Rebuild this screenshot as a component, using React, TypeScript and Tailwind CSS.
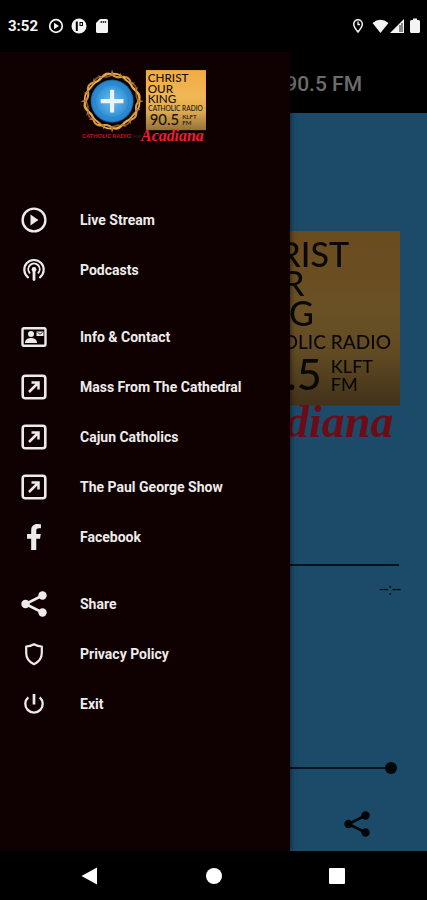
import React from "react";
import { FaFacebookF } from "react-icons/fa";

const SANS = "font-['Roboto','Liberation_Sans',sans-serif]";

function ringPath(radius: number, wobble: number, lobes: number, phase: number) {
  const points: string[] = [];
  for (let i = 0; i < 120; i++) {
    const a = (i / 120) * Math.PI * 2;
    const r = radius + wobble * Math.sin(lobes * a + phase);
    points.push(`${(93 + r * Math.cos(a)).toFixed(1)} ${(96 + r * Math.sin(a)).toFixed(1)}`);
  }
  return `M${points.join("L")}Z`;
}

function thornPath() {
  let d = "";
  for (let i = 0; i < 16; i++) {
    const a = (i / 16) * Math.PI * 2 - Math.PI / 2;
    const tip = i % 4 === 0 ? 92 : 86;
    const lean = i % 4 === 0 ? 0 : i % 2 === 0 ? 0.12 : -0.12;
    const at = (r: number, t: number) =>
      `${(93 + r * Math.cos(t)).toFixed(1)} ${(96 + r * Math.sin(t)).toFixed(1)}`;
    d += `M${at(74, a - 0.07)}L${at(tip, a + lean)}L${at(74, a + 0.07)}Z`;
  }
  return d;
}

function Logo({ id, className }: { id: string; className: string }) {
  return (
    <svg viewBox="0 0 368 226" className={className} role="img" aria-label="Christ Our King Catholic Radio">
      <defs>
        <linearGradient id={`${id}-gold`} x1="0" y1="0" x2="0" y2="1">
          <stop offset="0" stopColor="#f2ab45" />
          <stop offset="0.45" stopColor="#f0b755" />
          <stop offset="0.7" stopColor="#dca94f" />
          <stop offset="1" stopColor="#94713a" />
        </linearGradient>
        <radialGradient id={`${id}-blue`}>
          <stop offset="0" stopColor="#6fbdf0" />
          <stop offset="0.6" stopColor="#3f9cdd" />
          <stop offset="1" stopColor="#1f7fc8" />
        </radialGradient>
      </defs>
      <circle cx="93" cy="96" r="76" fill="#080406" />
      <g fill="none" strokeLinejoin="round">
        <path d={ringPath(76, 4, 8, 0)} stroke="#8a571b" strokeWidth="5" />
        <path d={ringPath(76, 5, 8, 3.1)} stroke="#d99a3a" strokeWidth="6" />
        <path d={ringPath(76, 4, 4, 1.4)} stroke="#efb350" strokeWidth="4" />
      </g>
      <path d={thornPath()} fill="#b87f2f" />
      <circle cx="93" cy="96" r="61" fill={`url(#${id}-blue)`} stroke="#1d6fae" strokeWidth="2" />
      <circle cx="93" cy="96" r="48" fill="none" stroke="#2b86cb" strokeWidth="3" />
      <path d="M93 63v66M60 96h66" stroke="#e9f4fb" strokeWidth="12" />
      <rect x="191" y="6" width="174" height="174" fill={`url(#${id}-gold)`} />
      <g fill="#17120c" fontFamily="Lato, sans-serif" fontWeight="500">
        <text x="196" y="42" fontSize="34">CHRIST</text>
        <text x="196" y="71" fontSize="34">OUR</text>
        <text x="196" y="101" fontSize="34">KING</text>
        <text x="198" y="124" fontSize="19">CATHOLIC RADIO</text>
        <text x="202" y="165" fontSize="43">90.5</text>
        <text x="296" y="148" fontSize="18">KLFT</text>
        <text x="296" y="166" fontSize="18">FM</text>
      </g>
      <text x="6" y="204" fontSize="17" fontWeight="700" fill="#c8102a" fontFamily="Lato, sans-serif">CATHOLIC RADIO</text>
      <text x="154" y="204" fontSize="11" fill="#3a2a2c" fontFamily="Lato, sans-serif">FOR</text>
      <text x="177" y="211" fontSize="46" fontWeight="700" fontStyle="italic" fill="#f51c34" fontFamily="'Liberation Serif', serif">Acadiana</text>
    </svg>
  );
}

const icon = "h-7 w-7 shrink-0";

function PlayIcon() {
  return (
    <svg viewBox="0 0 28 28" className={icon} fill="none">
      <circle cx="14" cy="14" r="11.4" stroke="currentColor" strokeWidth="2.4" />
      <path d="M10.5 8.500v11l8-5.500z" fill="currentColor" />
    </svg>
  );
}

function PodcastIcon() {
  return (
    <svg viewBox="0 0 28 28" className={icon} fill="none" stroke="currentColor" strokeLinecap="round">
      <path d="M8 21.300a9.700 9.700 0 1 1 12 0" strokeWidth="2.200" />
      <path d="M9.600 16.800a5.700 5.700 0 1 1 8.800 0" strokeWidth="1.900" />
      <circle cx="14" cy="13.500" r="2.400" fill="currentColor" stroke="none" />
      <path d="M14 14v9.500" strokeWidth="2.800" />
    </svg>
  );
}

function ContactIcon() {
  return (
    <svg viewBox="0 0 28 28" className={icon} fill="none">
      <rect x="2.500" y="5.300" width="23" height="17.400" rx="1.500" stroke="currentColor" strokeWidth="2.400" />
      <circle cx="11" cy="11" r="3" fill="currentColor" />
      <path d="M5 20c0-3.800 3.500-5 6-5s6 1.200 6 5z" fill="currentColor" />
      <path d="M16.500 8.500h7v4.500h-7z" fill="currentColor" />
      <path d="M17.500 9.500l2.500 1.700 2.500-1.700" stroke="#0e0102" strokeWidth="0.800" />
    </svg>
  );
}

function LinkOutIcon() {
  return (
    <svg viewBox="0 0 28 28" className={icon} fill="none" stroke="currentColor">
      <rect x="2.700" y="2.700" width="22.600" height="22.600" rx="2.500" strokeWidth="2.600" />
      <path d="M9 19l9-9M11.500 9.500h7v7" strokeWidth="2.500" />
    </svg>
  );
}

function FacebookIcon() {
  return (
    <span className="flex h-7 w-7 shrink-0 items-center justify-center">
      <FaFacebookF size={26} />
    </span>
  );
}

function ShareIcon({ className = icon }: { className?: string }) {
  return (
    <svg viewBox="0 0 28 28" className={className} fill="currentColor">
      <path d="M22.500 5.500L5.500 14l17 8.500" fill="none" stroke="currentColor" strokeWidth="2.600" />
      <circle cx="22.500" cy="5.500" r="4.200" />
      <circle cx="5.500" cy="14" r="4.200" />
      <circle cx="22.500" cy="22.500" r="4.200" />
    </svg>
  );
}

function ShieldIcon() {
  return (
    <svg viewBox="0 0 28 28" className={icon} fill="none" stroke="currentColor" strokeWidth="2.200" strokeLinejoin="round">
      <path d="M14 4.300c2.500 1.500 5 2.200 7.800 2.200v6.500c0 5-3 9-7.800 11.200-4.800-2.200-7.800-6.200-7.800-11.200v-6.500c2.800 0 5.300-.7 7.800-2.200z" />
    </svg>
  );
}

function PowerIcon() {
  return (
    <svg viewBox="0 0 28 28" className={icon} fill="none" stroke="currentColor">
      <path d="M8.300 7.300a8.700 8.700 0 1 0 11.400 0" strokeWidth="2.300" />
      <path d="M14 4v10.500" strokeWidth="2.700" />
    </svg>
  );
}

const groups: { label: string; Icon: React.ComponentType }[][] = [
  [
    { label: "Live Stream", Icon: PlayIcon },
    { label: "Podcasts", Icon: PodcastIcon },
  ],
  [
    { label: "Info & Contact", Icon: ContactIcon },
    { label: "Mass From The Cathedral", Icon: LinkOutIcon },
    { label: "Cajun Catholics", Icon: LinkOutIcon },
    { label: "The Paul George Show", Icon: LinkOutIcon },
    { label: "Facebook", Icon: FacebookIcon },
  ],
  [
    { label: "Share", Icon: ShareIcon },
    { label: "Privacy Policy", Icon: ShieldIcon },
    { label: "Exit", Icon: PowerIcon },
  ],
];

function StatusBar() {
  return (
    <div className="flex h-[52px] items-center bg-black pl-2 pr-1.5 text-[#f4f4f4]">
      <span className="text-[15px] font-bold leading-5">3:52</span>
      <div className="ml-2.5 flex flex-1 items-center gap-[7px]">
        <svg viewBox="0 0 16 16" className="h-4 w-4" fill="none">
          <circle cx="8" cy="8" r="6.300" stroke="currentColor" strokeWidth="1.700" />
          <path d="M6 4.800v6.400L11 8z" fill="currentColor" />
        </svg>
        <svg viewBox="0 0 16 16" className="h-4 w-4">
          <circle cx="8" cy="8" r="7.500" fill="currentColor" />
          <path d="M4.800 3.500h2v9.500h-2zM8.500 4h3.500v4H8.500z" fill="#000" />
          <path d="M9.500 5h1.500v2H9.500z" fill="currentColor" />
        </svg>
        <svg viewBox="0 0 16 16" className="h-4 w-4">
          <path d="M6 1h6.500q1.500 0 1.500 1.500v11q0 1.500-1.500 1.500h-9Q2 15 2 13.500V5z" fill="currentColor" />
          <path d="M6.500 4h6" stroke="#000" strokeWidth="1.500" strokeDasharray="1.500 .6" />
        </svg>
      </div>
      <div className="flex items-center">
        <svg viewBox="0 0 12 16" className="mr-2 h-4 w-3" fill="none" stroke="currentColor">
          <path d="M6 14C3.500 11 1.700 8.500 1.700 6a4.300 4.300 0 0 1 8.600 0c0 2.500-1.800 5-4.300 8z" strokeWidth="1.500" />
          <path d="M6 3.500V6.500h2" strokeWidth="1.300" />
        </svg>
        <svg viewBox="0 0 17 16" className="h-4 w-[17px]" fill="currentColor">
          <path d="M.5 5Q8.500-1.500 16.500 5L8.500 15z" />
        </svg>
        <svg viewBox="0 0 16 16" className="mr-1 h-4 w-4">
          <path d="M1 15L15 1v14z" fill="currentColor" />
          <path d="M11 7v7M13 5v9" stroke="#000" strokeWidth=".9" />
        </svg>
        <svg viewBox="0 0 12 16" className="h-4 w-3" fill="currentColor">
          <path d="M4 .5h4V2h1.500Q11 2 11 3.500v10q0 1.500-1.500 1.500h-7Q1 15 1 13.500v-10Q1 2 2.500 2H4z" />
        </svg>
      </div>
    </div>
  );
}

function Player() {
  return (
    <div className="flex flex-1 flex-col">
      <header className="flex h-[61px] items-center justify-end bg-black pr-[65px] pt-0.5">
        <h1 className="text-[21px] font-medium leading-6 text-[#6c6c6c]">90.5 FM</h1>
      </header>
      <main className="flex flex-1 flex-col bg-[#1c4b69] px-7 text-[#020609]">
        <div className="-mr-1 ml-1.5 mt-28 brightness-[.44]">
          <Logo id="cover" className="w-full" />
        </div>
        <progress aria-label="Playback position" max={1} value={0} className="mt-28 block h-[2px] w-full appearance-none bg-[#06121b] [&::-webkit-progress-bar]:bg-[#06121b]" />
        <div className="-mr-0.5 mt-3 text-right text-base leading-6">--:--</div>
        <div className="mt-40 flex h-3 items-center">
          <input
            type="range"
            aria-label="Volume"
            defaultValue={100}
            className="mr-0.5 h-[2px] w-full appearance-none bg-[#06121b] [&::-webkit-slider-thumb]:h-3 [&::-webkit-slider-thumb]:w-3 [&::-webkit-slider-thumb]:appearance-none [&::-webkit-slider-thumb]:rounded-full [&::-webkit-slider-thumb]:bg-[#020609]"
          />
        </div>
        <button type="button" aria-label="Share station" className="mr-7 mt-9 self-end">
          <ShareIcon className="h-7 w-7" />
        </button>
      </main>
    </div>
  );
}

function Drawer() {
  return (
    <aside className="absolute inset-y-0 left-0 flex w-[68%] flex-col bg-[#0f0102] shadow-[1px_0_5px_rgba(0,0,0,0.5)]">
      <div className="flex h-[143px] justify-center pr-1 pt-4">
        <Logo id="menu" className="h-[78px] w-[127px]" />
      </div>
      <nav className="flex flex-col gap-[17px]">
        {groups.map((items) => (
          <ul key={items[0].label}>
            {items.map(({ label, Icon }) => (
              <li key={label}>
                <a href="#" className="flex h-[50px] items-center gap-8 pl-5 text-[#eeebeb]">
                  <Icon />
                  <span className="text-sm font-bold">{label}</span>
                </a>
              </li>
            ))}
          </ul>
        ))}
      </nav>
    </aside>
  );
}

function NavigationBar() {
  return (
    <div className="flex h-[49px] items-center justify-between bg-black px-20 text-white">
      <button type="button" aria-label="Back">
        <svg viewBox="0 0 18 18" className="h-[18px] w-[18px]" fill="currentColor">
          <path d="M1.500 9L17 .5v17z" />
        </svg>
      </button>
      <button type="button" aria-label="Home" className="h-4 w-4 rounded-full bg-white" />
      <button type="button" aria-label="Recent apps" className="mr-0.5 h-4 w-4 rounded-[1px] bg-white" />
    </div>
  );
}

export default function App() {
  return (
    <div className={`flex min-h-screen flex-col overflow-hidden bg-black ${SANS}`}>
      <StatusBar />
      <div className="relative flex flex-1 flex-col">
        <Player />
        <Drawer />
      </div>
      <NavigationBar />
    </div>
  );
}
